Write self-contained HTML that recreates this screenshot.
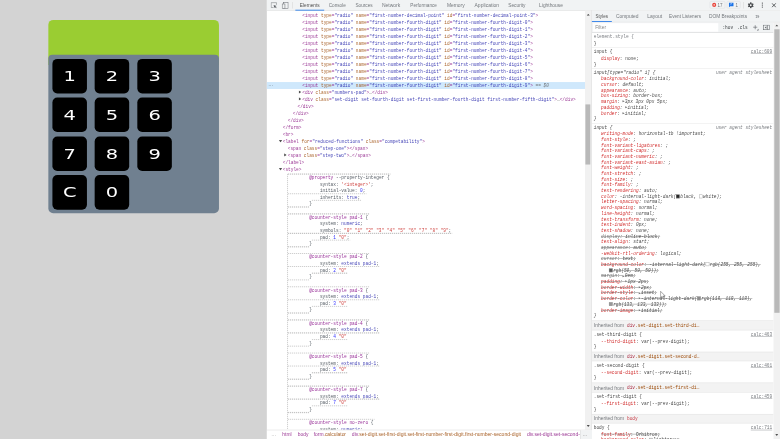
<!DOCTYPE html>
<html lang="en"><head><meta charset="utf-8"><title>calc devtools</title>
<style>
html,body{margin:0;padding:0;background:#fff;}
body{width:780px;height:439px;overflow:hidden;position:relative;}
#root{position:absolute;left:0;top:0;width:1920px;height:1081px;transform:scale(0.40625);transform-origin:0 0;overflow:hidden;background:#fff;filter:opacity(0.999);font-family:"Liberation Sans",sans-serif;font-size:12px;color:#333;}
.abs{position:absolute;}
.mono{font-family:"Liberation Mono",monospace;font-size:11px;white-space:pre;}
.ui{font-family:"Liberation Sans",sans-serif;font-size:12px;white-space:pre;opacity:.86;}
.row{position:absolute;left:0;height:17.23px;line-height:17.23px;font-family:"Liberation Mono",monospace;font-size:11px;white-space:pre;color:#881280;opacity:.84;}
.t{color:#881280}.n{color:#994500}.v{color:#1a1aa6}.g{color:#5f6368}
.k{color:#0000ff}.s{color:#c41a16}.a{color:#800080}.p{color:#222}
.srow{position:absolute;height:14px;line-height:14px;font-family:"Liberation Mono",monospace;font-size:11px;white-space:pre;color:#222;opacity:.84;}
.pn{color:#c80000}.pg{color:#5a5a5a}.it{font-style:italic}
.st{text-decoration:line-through;text-decoration-color:#444;}
.lnk{color:#5f6368;text-decoration:underline;}
.sep{position:absolute;height:1px;background:#e0e0e0;}
.sw{display:inline-block;width:9px;height:9px;border:1px solid #888;vertical-align:-1px;box-sizing:border-box;margin-right:1px}
.btn{position:absolute;width:85px;height:85px;background:#000;border-radius:12px;color:#fff;text-align:center;line-height:85px;font-size:33px;font-family:"DejaVu Sans","Liberation Sans",sans-serif;font-weight:400;}
.btn span{display:inline-block;transform:scaleX(1.45);position:relative;top:1px}
.dot{position:absolute;height:2.46px;margin-top:-0.7px;background:repeating-linear-gradient(90deg,#c4c4c4 0 2.4615px,#f2f2f2 2.4615px 4.923px);}
.vdot{position:absolute;width:2.46px;background:repeating-linear-gradient(180deg,#c4c4c4 0 2.4615px,#f2f2f2 2.4615px 4.923px);}
</style></head><body><div id="root">

<div class="abs" style="left:0;top:0;width:656.74px;height:1081px;background:#d3d3d3"></div>
<div class="abs" style="left:119.38px;top:49.23px;width:419.2px;height:110.77px;background:#9acd32;border-radius:12.31px 12.31px 0 0"></div>
<div class="abs" style="left:119.38px;top:134.89px;width:419.2px;height:390.15px;background:#708090;border-radius:9.85px 9.85px 11.82px 11.82px"></div>
<div class="btn" style="left:128.98px;top:144.74px"><span>1</span></div>
<div class="btn" style="left:233.35px;top:144.74px"><span>2</span></div>
<div class="btn" style="left:337.72px;top:144.74px"><span>3</span></div>
<div class="btn" style="left:128.98px;top:240.25px"><span>4</span></div>
<div class="btn" style="left:233.35px;top:240.25px"><span>5</span></div>
<div class="btn" style="left:337.72px;top:240.25px"><span>6</span></div>
<div class="btn" style="left:128.98px;top:335.75px"><span>7</span></div>
<div class="btn" style="left:233.35px;top:335.75px"><span>8</span></div>
<div class="btn" style="left:337.72px;top:335.75px"><span>9</span></div>
<div class="btn" style="left:128.98px;top:431.26px"><span>C</span></div>
<div class="btn" style="left:233.35px;top:431.26px"><span>0</span></div>
<div class="abs" style="left:656.74px;top:0;width:1263.26px;height:1081px;background:#fff"></div>
<div class="abs" style="left:656.74px;top:0;width:1263.26px;height:25px;background:#f1f3f4;border-bottom:1px solid #d6d6d6"></div>
<div id="f1" class="abs ui fit" style="transform-origin:0 50%;transform:scaleX(0.9742);left:737.72px;top:5px;height:16px;line-height:16px;color:#333">Elements</div>
<div id="f2" class="abs ui fit" style="transform-origin:0 50%;transform:scaleX(0.9616);left:809.11px;top:5px;height:16px;line-height:16px;color:#5f6368">Console</div>
<div id="f3" class="abs ui fit" style="transform-origin:0 50%;transform:scaleX(0.9616);left:875.32px;top:5px;height:16px;line-height:16px;color:#5f6368">Sources</div>
<div id="f4" class="abs ui fit" style="transform-origin:0 50%;transform:scaleX(1.0235);left:940.31px;top:5px;height:16px;line-height:16px;color:#5f6368">Network</div>
<div id="f5" class="abs ui fit" style="transform-origin:0 50%;transform:scaleX(0.9531);left:1009.97px;top:5px;height:16px;line-height:16px;color:#5f6368">Performance</div>
<div id="f6" class="abs ui fit" style="transform-origin:0 50%;transform:scaleX(1.0110);left:1099.82px;top:5px;height:16px;line-height:16px;color:#5f6368">Memory</div>
<div id="f7" class="abs ui fit" style="transform-origin:0 50%;transform:scaleX(1.0312);left:1167.51px;top:5px;height:16px;line-height:16px;color:#5f6368">Application</div>
<div id="f8" class="abs ui fit" style="transform-origin:0 50%;transform:scaleX(0.9820);left:1251.45px;top:5px;height:16px;line-height:16px;color:#5f6368">Security</div>
<div id="f9" class="abs ui fit" style="transform-origin:0 50%;transform:scaleX(0.9976);left:1326.77px;top:5px;height:16px;line-height:16px;color:#5f6368">Lighthouse</div>
<div class="abs" style="left:726.65px;top:24px;width:71.38px;height:2px;background:#1a73e8"></div>
<svg class="abs" style="left:666.07px;top:5.400px" width="17" height="17" viewBox="0 0 17 17"><path d="M7.500 13.500H1.500V1.500H14.500V7" fill="none" stroke="#6a6e73" stroke-width="1.200"/><path d="M7.500 7l7.500 2.800-3.100 1.300 3 3-1.300 1.300-3-3-1.300 3.100z" fill="#5f6368"/></svg>
<svg class="abs" style="left:693.15px;top:4.400px" width="18" height="18" viewBox="0 0 18 18"><rect x="4.600" y="1.600" width="11.500" height="15.300" fill="none" stroke="#6a6e73" stroke-width="1.300"/><rect x="1.600" y="5.800" width="6.800" height="11.100" fill="#f1f3f4" stroke="#6a6e73" stroke-width="1.300"/></svg>
<div class="abs" style="left:719.51px;top:5px;width:1px;height:16px;background:#ccc"></div>
<div class="abs" style="left:1746.95px;top:3px;width:37.91px;height:18px;border:1px solid #dadce0;border-radius:3px;box-sizing:border-box;background:#f1f3f4"></div>
<div class="abs" style="left:1753.35px;top:7px;width:10px;height:10px;border-radius:5px;background:#e8453c"></div>
<div class="abs" style="left:1756.31px;top:10px;width:4px;height:4px;border-radius:2px;background:#f7c9c5"></div>
<div class="abs ui" style="left:1766.4px;top:5px;line-height:15px;font-size:11px;color:#5f6368">17</div>
<div class="abs" style="left:1789.29px;top:3px;width:33.48px;height:18px;border:1px solid #dadce0;border-radius:3px;box-sizing:border-box;background:#f1f3f4"></div>
<svg class="abs" style="left:1794.46px;top:6px" width="12" height="13" viewBox="0 0 12 13"><path d="M0 0h12v9.500H3.500L0 12.500z" fill="#1a73e8"/><rect x="4" y="2.500" width="4" height="1.500" fill="#cfe0fb"/><rect x="4" y="5" width="2" height="1.500" fill="#cfe0fb"/></svg>
<div class="abs ui" style="left:1810.71px;top:5px;line-height:15px;font-size:11px;color:#5f6368">1</div>
<div class="abs" style="left:1830.4px;top:5px;width:1px;height:16px;background:#ccc"></div>
<svg class="abs" style="left:1840.12px;top:4.500px" width="16" height="16" viewBox="-8 -8 16 16"><g fill="#484b4e"><circle r="5.200"/><g id="tt"><rect x="-1.700" y="-7.300" width="3.400" height="14.600"/></g><rect x="-1.700" y="-7.300" width="3.400" height="14.600" transform="rotate(60)"/><rect x="-1.700" y="-7.300" width="3.400" height="14.600" transform="rotate(120)"/></g><circle r="2.300" fill="#f1f3f4"/></svg>
<div class="abs" style="left:1874.93px;top:6.0px;width:3px;height:3px;border-radius:2px;background:#484b4e"></div>
<div class="abs" style="left:1874.93px;top:11.2px;width:3px;height:3px;border-radius:2px;background:#484b4e"></div>
<div class="abs" style="left:1874.93px;top:16.4px;width:3px;height:3px;border-radius:2px;background:#484b4e"></div>
<svg class="abs" style="left:1899.23px;top:6.500px" width="12" height="12" viewBox="0 0 12 12"><path d="M1 1L11 11M11 1L1 11" stroke="#3c4043" stroke-width="2"/></svg>
<div id="r1" class="row" style="left:743.88px;top:29.55px">&lt;input <span class="n">type</span>=<span class="v">"radio"</span> <span class="n">name</span>=<span class="v">"first-number-decimal-point"</span> <span class="n">id</span>=<span class="v">"first-number-decimal-point-3"</span>&gt;</div>
<div id="r2" class="row" style="left:743.88px;top:46.78px">&lt;input <span class="n">type</span>=<span class="v">"radio"</span> <span class="n">name</span>=<span class="v">"first-number-fourth-digit"</span> <span class="n">id</span>=<span class="v">"first-number-fourth-digit-0"</span>&gt;</div>
<div id="r3" class="row" style="left:743.88px;top:64.52px">&lt;input <span class="n">type</span>=<span class="v">"radio"</span> <span class="n">name</span>=<span class="v">"first-number-fourth-digit"</span> <span class="n">id</span>=<span class="v">"first-number-fourth-digit-1"</span>&gt;</div>
<div id="r4" class="row" style="left:743.88px;top:81.75px">&lt;input <span class="n">type</span>=<span class="v">"radio"</span> <span class="n">name</span>=<span class="v">"first-number-fourth-digit"</span> <span class="n">id</span>=<span class="v">"first-number-fourth-digit-2"</span>&gt;</div>
<div id="r5" class="row" style="left:743.88px;top:98.98px">&lt;input <span class="n">type</span>=<span class="v">"radio"</span> <span class="n">name</span>=<span class="v">"first-number-fourth-digit"</span> <span class="n">id</span>=<span class="v">"first-number-fourth-digit-3"</span>&gt;</div>
<div id="r6" class="row" style="left:743.88px;top:115.71px">&lt;input <span class="n">type</span>=<span class="v">"radio"</span> <span class="n">name</span>=<span class="v">"first-number-fourth-digit"</span> <span class="n">id</span>=<span class="v">"first-number-fourth-digit-4"</span>&gt;</div>
<div id="r7" class="row" style="left:743.88px;top:132.94px">&lt;input <span class="n">type</span>=<span class="v">"radio"</span> <span class="n">name</span>=<span class="v">"first-number-fourth-digit"</span> <span class="n">id</span>=<span class="v">"first-number-fourth-digit-5"</span>&gt;</div>
<div id="r8" class="row" style="left:743.88px;top:150.67px">&lt;input <span class="n">type</span>=<span class="v">"radio"</span> <span class="n">name</span>=<span class="v">"first-number-fourth-digit"</span> <span class="n">id</span>=<span class="v">"first-number-fourth-digit-6"</span>&gt;</div>
<div id="r9" class="row" style="left:743.88px;top:167.90px">&lt;input <span class="n">type</span>=<span class="v">"radio"</span> <span class="n">name</span>=<span class="v">"first-number-fourth-digit"</span> <span class="n">id</span>=<span class="v">"first-number-fourth-digit-7"</span>&gt;</div>
<div id="r10" class="row" style="left:743.88px;top:184.63px">&lt;input <span class="n">type</span>=<span class="v">"radio"</span> <span class="n">name</span>=<span class="v">"first-number-fourth-digit"</span> <span class="n">id</span>=<span class="v">"first-number-fourth-digit-8"</span>&gt;</div>
<div class="abs" style="left:656.74px;top:201.86px;width:783.02px;height:17.23px;background:#cfe8fc"></div>
<div id="r11" class="row" style="left:743.88px;top:201.86px">&lt;input <span class="n">type</span>=<span class="v">"radio"</span> <span class="n">name</span>=<span class="v">"first-number-fourth-digit"</span> <span class="n">id</span>=<span class="v">"first-number-fourth-digit-9"</span>&gt;<span style="color:#5a5a5a"> == </span><span style="color:#5a5a5a;font-style:italic">$0</span></div>
<div class="abs ui" style="left:660.43px;top:200.46px;line-height:16px;color:#444;font-size:12px">…</div>
<svg class="abs" style="left:734.72px;top:221.72px" width="7" height="9" viewBox="0 0 7 9"><path d="M0.500 0.500L6.500 4.500L0.500 8.500z" fill="#505050"/></svg>
<div id="r12" class="row" style="left:743.88px;top:219.59px">&lt;div <span class="n">class</span>=<span class="v">"numbers-pad"</span>&gt;<span class="p">…</span>&lt;/div&gt;</div>
<svg class="abs" style="left:734.72px;top:238.95px" width="7" height="9" viewBox="0 0 7 9"><path d="M0.500 0.500L6.500 4.500L0.500 8.500z" fill="#505050"/></svg>
<div id="r13" class="row" style="left:743.88px;top:236.82px">&lt;div <span class="n">class</span>=<span class="v">"set-digit set-fourth-digit set-first-number-fourth-digit first-number-fifth-digit"</span>&gt;<span class="p">…</span>&lt;/div&gt;</div>
<div id="r14" class="row" style="left:732.31px;top:253.55px">&lt;/div&gt;</div>
<div id="r15" class="row" style="left:720.49px;top:270.78px">&lt;/div&gt;</div>
<div id="r16" class="row" style="left:708.18px;top:288.52px">&lt;/div&gt;</div>
<div id="r17" class="row" style="left:695.88px;top:305.75px">&lt;/form&gt;</div>
<div id="r18" class="row" style="left:695.88px;top:322.98px">&lt;br&gt;</div>
<svg class="abs" style="left:685.72px;top:343.83px" width="9" height="7" viewBox="0 0 9 7"><path d="M0.500 0.500L8.500 0.500L4.500 6.500z" fill="#505050"/></svg>
<div id="r19" class="row" style="left:695.88px;top:339.71px">&lt;label <span class="n">for</span>=<span class="v">"reduced-functions"</span> <span class="n">class</span>=<span class="v">"competability"</span>&gt;</div>
<div id="r20" class="row" style="left:708.18px;top:356.94px">&lt;span <span class="n">class</span>=<span class="v">"step-one"</span>&gt;&lt;/span&gt;</div>
<svg class="abs" style="left:699.02px;top:376.79px" width="7" height="9" viewBox="0 0 7 9"><path d="M0.500 0.500L6.500 4.500L0.500 8.500z" fill="#505050"/></svg>
<div id="r21" class="row" style="left:708.18px;top:374.67px">&lt;span <span class="n">class</span>=<span class="v">"step-two"</span>&gt;<span class="p">…</span>&lt;/span&gt;</div>
<div id="r22" class="row" style="left:695.88px;top:391.90px">&lt;/label&gt;</div>
<svg class="abs" style="left:685.72px;top:412.75px" width="9" height="7" viewBox="0 0 9 7"><path d="M0.500 0.500L8.500 0.500L4.500 6.500z" fill="#505050"/></svg>
<div id="r23" class="row" style="left:695.88px;top:408.63px">&lt;style&gt;</div>
<div id="r24" class="row" style="left:708.18px;top:428.98px;height:16.32px;line-height:16.32px;color:#303942">        <span class="a">@property</span> --property-integer {</div>
<div class="dot" style="left:708.18px;top:427.82px;width:253.14px"></div>
<div id="r25" class="row" style="left:708.18px;top:445.80px;height:16.32px;line-height:16.32px;color:#303942">            syntax: <span class="s">'&lt;integer&gt;'</span>;</div>
<div id="r26" class="row" style="left:708.18px;top:461.12px;height:16.32px;line-height:16.32px;color:#303942">            initial-value: <span class="k">0</span>;</div>
<div class="dot" style="left:708.18px;top:476.21px;width:193.77px"></div>
<div id="r27" class="row" style="left:708.18px;top:477.94px;height:16.32px;line-height:16.32px;color:#303942">            inherits: <span class="v">true</span>;</div>
<div class="dot" style="left:766.77px;top:492.53px;width:121.99px"></div>
<div id="r28" class="row" style="left:708.18px;top:493.76px;height:16.32px;line-height:16.32px;color:#303942">        }</div>
<div class="dot" style="left:708.18px;top:508.85px;width:52.78px"></div>
<div id="r29" class="row" style="left:708.18px;top:526.90px;height:16.32px;line-height:16.32px;color:#303942">        <span class="a">@counter-style pad-1</span> {</div>
<div class="dot" style="left:708.18px;top:525.74px;width:200.37px"></div>
<div id="r30" class="row" style="left:708.18px;top:542.72px;height:16.32px;line-height:16.32px;color:#303942">            system: <span class="v">numeric</span>;</div>
<div id="r31" class="row" style="left:708.18px;top:559.04px;height:16.32px;line-height:16.32px;color:#303942">            symbols: <span class="s">"0" "1" "2" "3" "4" "5" "6" "7" "8" "9"</span>;</div>
<div class="dot" style="left:708.18px;top:574.13px;width:404.87px"></div>
<div id="r32" class="row" style="left:708.18px;top:576.86px;height:16.32px;line-height:16.32px;color:#303942">            pad: <span class="k">1</span> <span class="s">"0"</span>;</div>
<div class="dot" style="left:766.77px;top:590.45px;width:95.61px"></div>
<div id="r33" class="row" style="left:708.18px;top:591.68px;height:16.32px;line-height:16.32px;color:#303942">        }</div>
<div class="dot" style="left:708.18px;top:606.77px;width:52.78px"></div>
<div id="r34" class="row" style="left:708.18px;top:624.32px;height:16.32px;line-height:16.32px;color:#303942">        <span class="a">@counter-style pad-2</span> {</div>
<div class="dot" style="left:708.18px;top:623.66px;width:200.37px"></div>
<div id="r35" class="row" style="left:708.18px;top:640.64px;height:16.32px;line-height:16.32px;color:#303942">            system: <span class="v">extends pad-1</span>;</div>
<div class="dot" style="left:708.18px;top:655.73px;width:226.76px"></div>
<div id="r36" class="row" style="left:708.18px;top:657.96px;height:16.32px;line-height:16.32px;color:#303942">            pad: <span class="k">2</span> <span class="s">"0"</span></div>
<div class="dot" style="left:766.77px;top:672.05px;width:89.01px"></div>
<div id="r37" class="row" style="left:708.18px;top:673.28px;height:16.32px;line-height:16.32px;color:#303942">        }</div>
<div class="dot" style="left:708.18px;top:688.37px;width:52.78px"></div>
<div id="r38" class="row" style="left:708.18px;top:706.92px;height:16.32px;line-height:16.32px;color:#303942">        <span class="a">@counter-style pad-3</span> {</div>
<div class="dot" style="left:708.18px;top:705.26px;width:200.37px"></div>
<div id="r39" class="row" style="left:708.18px;top:722.24px;height:16.32px;line-height:16.32px;color:#303942">            system: <span class="v">extends pad-1</span>;</div>
<div class="dot" style="left:708.18px;top:737.33px;width:226.76px"></div>
<div id="r40" class="row" style="left:708.18px;top:738.56px;height:16.32px;line-height:16.32px;color:#303942">            pad: <span class="k">3</span> <span class="s">"0"</span></div>
<div class="dot" style="left:766.77px;top:753.65px;width:89.01px"></div>
<div id="r41" class="row" style="left:708.18px;top:754.88px;height:16.32px;line-height:16.32px;color:#303942">        }</div>
<div class="dot" style="left:708.18px;top:769.97px;width:52.78px"></div>
<div id="r42" class="row" style="left:708.18px;top:787.52px;height:16.32px;line-height:16.32px;color:#303942">        <span class="a">@counter-style pad-4</span> {</div>
<div class="dot" style="left:708.18px;top:786.86px;width:200.37px"></div>
<div id="r43" class="row" style="left:708.18px;top:803.84px;height:16.32px;line-height:16.32px;color:#303942">            system: <span class="v">extends pad-1</span>;</div>
<div class="dot" style="left:708.18px;top:818.93px;width:226.76px"></div>
<div id="r44" class="row" style="left:708.18px;top:820.16px;height:16.32px;line-height:16.32px;color:#303942">            pad: <span class="k">4</span> <span class="s">"0"</span></div>
<div class="dot" style="left:766.77px;top:835.25px;width:89.01px"></div>
<div id="r45" class="row" style="left:708.18px;top:836.98px;height:16.32px;line-height:16.32px;color:#303942">        }</div>
<div class="dot" style="left:708.18px;top:851.57px;width:52.78px"></div>
<div id="r46" class="row" style="left:708.18px;top:869.12px;height:16.32px;line-height:16.32px;color:#303942">        <span class="a">@counter-style pad-5</span> {</div>
<div class="dot" style="left:708.18px;top:868.46px;width:200.37px"></div>
<div id="r47" class="row" style="left:708.18px;top:886.94px;height:16.32px;line-height:16.32px;color:#303942">            system: <span class="v">extends pad-1</span>;</div>
<div class="dot" style="left:708.18px;top:900.53px;width:226.76px"></div>
<div id="r48" class="row" style="left:708.18px;top:901.76px;height:16.32px;line-height:16.32px;color:#303942">            pad: <span class="k">5</span> <span class="s">"0"</span></div>
<div class="dot" style="left:766.77px;top:916.85px;width:89.01px"></div>
<div id="r49" class="row" style="left:708.18px;top:918.58px;height:16.32px;line-height:16.32px;color:#303942">        }</div>
<div class="dot" style="left:708.18px;top:933.17px;width:52.78px"></div>
<div id="r50" class="row" style="left:708.18px;top:950.72px;height:16.32px;line-height:16.32px;color:#303942">        <span class="a">@counter-style pad-7</span> {</div>
<div class="dot" style="left:708.18px;top:950.06px;width:200.37px"></div>
<div id="r51" class="row" style="left:708.18px;top:967.54px;height:16.32px;line-height:16.32px;color:#303942">            system: <span class="v">extends pad-1</span>;</div>
<div class="dot" style="left:708.18px;top:982.13px;width:226.76px"></div>
<div id="r52" class="row" style="left:708.18px;top:983.36px;height:16.32px;line-height:16.32px;color:#303942">            pad: <span class="k">7</span> <span class="s">"0"</span></div>
<div class="dot" style="left:766.77px;top:998.45px;width:89.01px"></div>
<div id="r53" class="row" style="left:708.18px;top:999.68px;height:16.32px;line-height:16.32px;color:#303942">        }</div>
<div class="dot" style="left:708.18px;top:1014.77px;width:52.78px"></div>
<div id="r54" class="row" style="left:708.18px;top:1032.32px;height:16.32px;line-height:16.32px;color:#303942">        <span class="a">@counter-style no-zero</span> {</div>
<div class="dot" style="left:708.18px;top:1031.66px;width:213.56px"></div>
<div id="r55" class="row" style="left:708.18px;top:1048.64px;height:16.32px;line-height:16.32px;color:#303942">            system: <span class="v">numeric</span>;</div>
<div class="vdot" style="left:706.71px;top:428.06px;height:627.94px"></div>
<div class="abs" style="left:1439.75px;top:26px;width:15.75px;height:1031.72px;background:#f1f1f1"></div>
<div class="abs" style="left:1441.48px;top:257.23px;width:11.82px;height:147.69px;background:#b9b9b9"></div>
<svg class="abs" style="left:1443.63px;top:33.68px" width="8" height="5"><path d="M0 5L4 0L8 5z" fill="#505050"/></svg>
<svg class="abs" style="left:1443.63px;top:1046.12px" width="8" height="5"><path d="M0 0L4 5L8 0z" fill="#505050"/></svg>
<div class="abs" style="left:1455.51px;top:26px;width:1px;height:1060px;background:#cdcdcd"></div>
<div class="abs" style="left:656.74px;top:1057.72px;width:798.77px;height:30px;background:#fff;border-top:1px solid #d0d0d0"></div>
<div class="abs ui" style="left:667.82px;top:1059.78px;line-height:16px;color:#777">…</div>
<div id="f10" class="abs ui fit" style="transform-origin:0 50%;transform:scaleX(1.0096);left:694.65px;top:1061.78px;line-height:16px;"><span class="t">html</span></div>
<div id="f11" class="abs ui fit" style="transform-origin:0 50%;transform:scaleX(1.0119);left:733.05px;top:1061.78px;line-height:16px;"><span class="t">body</span></div>
<div id="f12" class="abs ui fit" style="transform-origin:0 50%;transform:scaleX(1.0133);left:772.43px;top:1061.78px;line-height:16px;"><span class="t">form</span><span class="n">.calculator</span></div>
<div id="f13" class="abs ui fit" style="transform-origin:0 50%;transform:scaleX(1.0381);left:865.97px;top:1061.78px;line-height:16px;"><span class="t">div</span><span class="n">.set-digit.set-first-digit.set-first-number-first-digit.first-number-second-digit</span></div>
<div id="f14" class="abs ui fit" style="transform-origin:0 50%;transform:scaleX(1.0367);left:1297.23px;top:1061.78px;line-height:16px;"><span class="t">div.set-digit.set-second-</span></div>
<div class="abs" style="left:1428.43px;top:1058.72px;width:27.08px;height:30px;background:#f1f3f4;border-left:1px solid #d0d0d0"></div>
<div class="abs ui" style="left:1433.85px;top:1059.78px;line-height:16px;color:#555">…</div>
<div class="abs" style="left:1456.74px;top:26px;width:463.26px;height:28.15px;background:#f1f3f4;border-bottom:1px solid #cdcdcd"></div>
<div id="f15" class="abs ui fit" style="transform-origin:0 50%;transform:scaleX(0.9337);left:1466.09px;top:32.12px;line-height:16px;color:#333">Styles</div>
<div id="f16" class="abs ui fit" style="transform-origin:0 50%;transform:scaleX(1.0091);left:1516.31px;top:32.12px;line-height:16px;color:#5f6368">Computed</div>
<div id="f17" class="abs ui fit" style="transform-origin:0 50%;transform:scaleX(1.0247);left:1592.62px;top:32.12px;line-height:16px;color:#5f6368">Layout</div>
<div id="f18" class="abs ui fit" style="transform-origin:0 50%;transform:scaleX(0.9523);left:1646.77px;top:32.12px;line-height:16px;color:#5f6368">Event Listeners</div>
<div id="f19" class="abs ui fit" style="transform-origin:0 50%;transform:scaleX(0.9929);left:1745.23px;top:32.12px;line-height:16px;color:#5f6368">DOM Breakpoints</div>
<div class="abs ui" style="left:1858.95px;top:31.619999999999997px;line-height:16px;color:#5f6368;font-size:19px">»</div>
<div class="abs" style="left:1456.74px;top:52.43px;width:49.72px;height:2px;background:#1a73e8"></div>
<div class="abs" style="left:1456.74px;top:54.89px;width:447.51px;height:25.11px;background:#f1f3f4;border-bottom:1px solid #cdcdcd"></div>
<div class="abs" style="left:1459.69px;top:56.89px;width:308.43px;height:21.11px;background:#fff"></div>
<div class="abs ui" style="left:1465.11px;top:59.69px;line-height:16px;color:#757575">Filter</div>
<div class="abs mono" style="left:1778.22px;top:59.69px;line-height:16px;color:#3c4043">:hov</div>
<div class="abs mono" style="left:1814.15px;top:59.69px;line-height:16px;color:#3c4043">.cls</div>
<svg class="abs" style="left:1852.95px;top:61.2px" width="16" height="16" viewBox="0 0 16 16"><path d="M6 1v10M1 6h10" stroke="#5f6368" stroke-width="1.500" fill="none"/><path d="M14 10v4h-4z" fill="#5f6368"/></svg>
<svg class="abs" style="left:1878.15px;top:60.7px" width="17" height="13" viewBox="0 0 17 13"><rect x="0.750" y="0.750" width="15.500" height="11.500" fill="none" stroke="#5f6368" stroke-width="1.500"/><path d="M11 1v11" stroke="#5f6368" stroke-width="1.500"/><path d="M8.500 3.500v6l-4-3z" fill="#5f6368"/></svg>
<div id="r56" class="srow " style="left:1461.42px;top:83.58px"><span class="g">element.style {</span></div>
<div id="r57" class="srow " style="left:1461.42px;top:99.58px">}</div>
<div class="sep" style="left:1456.74px;top:115.94px;width:447.51px"></div>
<div id="r58" class="srow " style="left:1461.42px;top:120.02px">input {</div>
<div id="r59" class="srow " style="right:19.200000000000045px;top:120.02px"><span class="lnk">calc:609</span></div>
<div id="r60" class="srow " style="left:1479.63px;top:136.75px"><span class="pn">display</span>: none;</div>
<div id="r61" class="srow " style="left:1461.42px;top:151.53px">}</div>
<div class="sep" style="left:1456.74px;top:167.88px;width:447.51px"></div>
<div id="r62" class="srow it" style="left:1461.42px;top:170.97px">input[type="radio" i] {</div>
<div id="r63" class="srow it" style="right:19.200000000000045px;top:170.97px"><span class="g">user agent stylesheet</span></div>
<div id="r64" class="srow it " style="left:1479.63px;top:187.22px"><span class="pn">background-color</span>: initial;</div>
<div id="r65" class="srow it " style="left:1479.63px;top:201.22px"><span class="pn">cursor</span>: default;</div>
<div id="r66" class="srow it " style="left:1479.63px;top:215.72px"><span class="pn">appearance</span>: auto;</div>
<div id="r67" class="srow it " style="left:1479.63px;top:229.22px"><span class="pn">box-sizing</span>: border-box;</div>
<div id="r68" class="srow it " style="left:1479.63px;top:243.22px"><span class="pn">margin</span>: <span style="font-size:7px;color:#555;font-family:'DejaVu Sans',sans-serif;font-style:normal;display:inline-block;width:5.7px;vertical-align:1px;text-decoration:none">▶</span>3px 3px 0px 5px;</div>
<div id="r69" class="srow it " style="left:1479.63px;top:257.72px"><span class="pn">padding</span>: <span style="font-size:7px;color:#555;font-family:'DejaVu Sans',sans-serif;font-style:normal;display:inline-block;width:5.7px;vertical-align:1px;text-decoration:none">▶</span>initial;</div>
<div id="r70" class="srow it " style="left:1479.63px;top:271.72px"><span class="pn">border</span>: <span style="font-size:7px;color:#555;font-family:'DejaVu Sans',sans-serif;font-style:normal;display:inline-block;width:5.7px;vertical-align:1px;text-decoration:none">▶</span>initial;</div>
<div id="r71" class="srow it" style="left:1461.42px;top:285.22px">}</div>
<div class="sep" style="left:1456.74px;top:303.26px;width:447.51px"></div>
<div id="r72" class="srow it" style="left:1461.42px;top:306.61px">input {</div>
<div id="r73" class="srow it" style="right:19.200000000000045px;top:306.61px"><span class="g">user agent stylesheet</span></div>
<div id="r74" class="srow it " style="left:1479.63px;top:322.11px"><span class="pn">writing-mode</span>: horizontal-tb !important;</div>
<div id="r75" class="srow it " style="left:1479.63px;top:336.11px"><span class="pn">font-style</span>: ;</div>
<div id="r76" class="srow it " style="left:1479.63px;top:350.61px"><span class="pn">font-variant-ligatures</span>: ;</div>
<div id="r77" class="srow it " style="left:1479.63px;top:364.11px"><span class="pn">font-variant-caps</span>: ;</div>
<div id="r78" class="srow it " style="left:1479.63px;top:378.11px"><span class="pn">font-variant-numeric</span>: ;</div>
<div id="r79" class="srow it " style="left:1479.63px;top:392.61px"><span class="pn">font-variant-east-asian</span>: ;</div>
<div id="r80" class="srow it " style="left:1479.63px;top:406.11px"><span class="pn">font-weight</span>: ;</div>
<div id="r81" class="srow it " style="left:1479.63px;top:420.11px"><span class="pn">font-stretch</span>: ;</div>
<div id="r82" class="srow it " style="left:1479.63px;top:434.61px"><span class="pn">font-size</span>: ;</div>
<div id="r83" class="srow it " style="left:1479.63px;top:448.11px"><span class="pn">font-family</span>: ;</div>
<div id="r84" class="srow it " style="left:1479.63px;top:462.11px"><span class="pn">text-rendering</span>: auto;</div>
<div id="r85" class="srow it " style="left:1479.63px;top:476.61px"><span class="pn">color</span>: -internal-light-dark(<span class="sw" style="background:#000"></span>black, <span class="sw" style="background:#fff"></span>white);</div>
<div id="r86" class="srow it " style="left:1479.63px;top:490.11px"><span class="pn">letter-spacing</span>: normal;</div>
<div id="r87" class="srow it " style="left:1479.63px;top:504.11px"><span class="pn">word-spacing</span>: normal;</div>
<div id="r88" class="srow it " style="left:1479.63px;top:518.11px"><span class="pn">line-height</span>: normal;</div>
<div id="r89" class="srow it " style="left:1479.63px;top:532.61px"><span class="pn">text-transform</span>: none;</div>
<div id="r90" class="srow it " style="left:1479.63px;top:546.11px"><span class="pn">text-indent</span>: 0px;</div>
<div id="r91" class="srow it " style="left:1479.63px;top:560.11px"><span class="pn">text-shadow</span>: none;</div>
<div id="r92" class="srow it st" style="left:1479.63px;top:574.61px"><span class="pg">display</span>: inline-block;</div>
<div id="r93" class="srow it " style="left:1479.63px;top:588.11px"><span class="pn">text-align</span>: start;</div>
<div id="r94" class="srow it st" style="left:1479.63px;top:602.11px"><span class="pg">appearance</span>: auto;</div>
<div id="r95" class="srow it " style="left:1479.63px;top:616.61px"><span class="pn">-webkit-rtl-ordering</span>: logical;</div>
<div id="r96" class="srow it st" style="left:1479.63px;top:630.11px"><span class="pg">cursor</span>: text;</div>
<div id="r97" class="srow it st" style="left:1479.63px;top:644.11px"><span class="pn">background-color</span>: -internal-light-dark(<span class="sw" style="background:#fff"></span>rgb(255, 255, 255),</div>
<div id="r98" class="srow it st" style="left:1499.32px;top:658.61px"><span class="sw" style="background:#3b3b3b"></span>rgb(59, 59, 59));</div>
<div id="r99" class="srow it st" style="left:1479.63px;top:672.11px"><span class="pg">margin</span>: <span style="font-size:7px;color:#555;font-family:'DejaVu Sans',sans-serif;font-style:normal;display:inline-block;width:5.7px;vertical-align:1px;text-decoration:none">▶</span>0em;</div>
<div id="r100" class="srow it st" style="left:1479.63px;top:686.11px"><span class="pn">padding</span>: <span style="font-size:7px;color:#555;font-family:'DejaVu Sans',sans-serif;font-style:normal;display:inline-block;width:5.7px;vertical-align:1px;text-decoration:none">▶</span>1px 2px;</div>
<div id="r101" class="srow it st" style="left:1479.63px;top:700.61px"><span class="pn">border-width</span>: <span style="font-size:7px;color:#555;font-family:'DejaVu Sans',sans-serif;font-style:normal;display:inline-block;width:5.7px;vertical-align:1px;text-decoration:none">▶</span>2px;</div>
<div id="r102" class="srow it st" style="left:1479.63px;top:714.11px"><span class="pn">border-style</span>: <span style="font-size:7px;color:#555;font-family:'DejaVu Sans',sans-serif;font-style:normal;display:inline-block;width:5.7px;vertical-align:1px;text-decoration:none">▶</span>inset;</div>
<div id="r103" class="srow it st" style="left:1479.63px;top:728.11px"><span class="pn">border-color</span>: <span style="font-size:7px;color:#555;font-family:'DejaVu Sans',sans-serif;font-style:normal;display:inline-block;width:5.7px;vertical-align:1px;text-decoration:none">▶</span>-internal-light-dark(<span class="sw" style="background:#767676"></span>rgb(118, 118, 118),</div>
<div id="r104" class="srow it st" style="left:1499.32px;top:742.11px"><span class="sw" style="background:#858585"></span>rgb(133, 133, 133));</div>
<div id="r105" class="srow it st" style="left:1479.63px;top:756.61px"><span class="pn">border-image</span>: <span style="font-size:7px;color:#555;font-family:'DejaVu Sans',sans-serif;font-style:normal;display:inline-block;width:5.7px;vertical-align:1px;text-decoration:none">▶</span>initial;</div>
<div id="r106" class="srow it" style="left:1461.42px;top:770.60px">}</div>
<div class="abs" style="left:1456.74px;top:789.17px;width:447.51px;height:23.63px;background:#f3f3f3;border-top:1px solid #e0e0e0;border-bottom:1px solid #e0e0e0;box-sizing:border-box"></div>
<div class="abs ui" style="left:1462.15px;top:793.72px;line-height:16px;color:#5f6368">Inherited from </div>
<div class="abs mono" style="left:1543.38px;top:793.72px;line-height:16px;"><span style="color:#a8243c">div</span><span class="n">.set-digit.set-third-di…</span></div>
<div id="r107" class="srow " style="left:1461.42px;top:816.88px">.set-third-digit {</div>
<div id="r108" class="srow " style="right:19.200000000000045px;top:816.88px"><span class="lnk">calc:463</span></div>
<div id="r109" class="srow " style="left:1479.63px;top:833.87px"><span class="pn">--third-digit</span>: var(--prev-digit);</div>
<div id="r110" class="srow " style="left:1461.42px;top:846.91px">}</div>
<div class="abs" style="left:1456.74px;top:865.72px;width:447.51px;height:23.63px;background:#f3f3f3;border-top:1px solid #e0e0e0;border-bottom:1px solid #e0e0e0;box-sizing:border-box"></div>
<div class="abs ui" style="left:1462.15px;top:870.28px;line-height:16px;color:#5f6368">Inherited from </div>
<div class="abs mono" style="left:1543.38px;top:870.28px;line-height:16px;"><span style="color:#a8243c">div</span><span class="n">.set-digit.set-second-d…</span></div>
<div id="r111" class="srow " style="left:1461.42px;top:893.43px">.set-second-digit {</div>
<div id="r112" class="srow " style="right:19.200000000000045px;top:893.43px"><span class="lnk">calc:461</span></div>
<div id="r113" class="srow " style="left:1479.63px;top:909.92px"><span class="pn">--second-digit</span>: var(--prev-digit);</div>
<div id="r114" class="srow " style="left:1461.42px;top:923.46px">}</div>
<div class="abs" style="left:1456.74px;top:942.28px;width:447.51px;height:23.63px;background:#f3f3f3;border-top:1px solid #e0e0e0;border-bottom:1px solid #e0e0e0;box-sizing:border-box"></div>
<div class="abs ui" style="left:1462.15px;top:946.83px;line-height:16px;color:#5f6368">Inherited from </div>
<div class="abs mono" style="left:1543.38px;top:946.83px;line-height:16px;"><span style="color:#a8243c">div</span><span class="n">.set-digit.set-first-di…</span></div>
<div id="r115" class="srow " style="left:1461.42px;top:969.98px">.set-first-digit {</div>
<div id="r116" class="srow " style="right:19.200000000000045px;top:969.98px"><span class="lnk">calc:459</span></div>
<div id="r117" class="srow " style="left:1479.63px;top:986.48px"><span class="pn">--first-digit</span>: var(--prev-digit);</div>
<div id="r118" class="srow " style="left:1461.42px;top:1000.52px">}</div>
<div class="abs" style="left:1456.74px;top:1018.83px;width:447.51px;height:23.63px;background:#f3f3f3;border-top:1px solid #e0e0e0;border-bottom:1px solid #e0e0e0;box-sizing:border-box"></div>
<div class="abs ui" style="left:1462.15px;top:1023.3800000000001px;line-height:16px;color:#5f6368">Inherited from </div>
<div class="abs mono" style="left:1543.38px;top:1023.3800000000001px;line-height:16px;"><span style="color:#c83c46">body</span></div>
<div id="r119" class="srow " style="left:1461.42px;top:1046.54px">body {</div>
<div id="r120" class="srow " style="right:19.200000000000045px;top:1046.54px"><span class="lnk">calc:711</span></div>
<div id="r121" class="srow st" style="left:1479.63px;top:1062.29px"><span class="pn">font-family</span>: Orbitron;</div>
<div id="r122" class="srow " style="left:1479.63px;top:1076.32px"><span class="pn">background-color</span>: <span class="sw" style="background:#d3d3d3"></span>lightgrey;</div>
<div class="abs" style="left:1904.25px;top:54.89px;width:15.75px;height:1060px;background:#f1f1f1"></div>
<div class="abs" style="left:1905.97px;top:71.88px;width:12.8px;height:697.85px;background:#b9b9b9"></div>
<svg class="abs" style="left:1908.12px;top:60.27px" width="8" height="5"><path d="M0 5L4 0L8 5z" fill="#505050"/></svg>
<svg class="abs" style="left:1908.12px;top:1068.27px" width="8" height="5"><path d="M0 0L4 5L8 0z" fill="#505050"/></svg>
<svg class="abs" style="left:1625.11px;top:716.31px" width="14" height="21" viewBox="-1 -1 14 21"><path d="M0 0L0 16L3.800 12.500L6.500 18.600L8.900 17.500L6.300 11.700L11.500 11.700Z" fill="#fff" stroke="#444" stroke-width="1.200"/></svg>
</div>
</body></html>
